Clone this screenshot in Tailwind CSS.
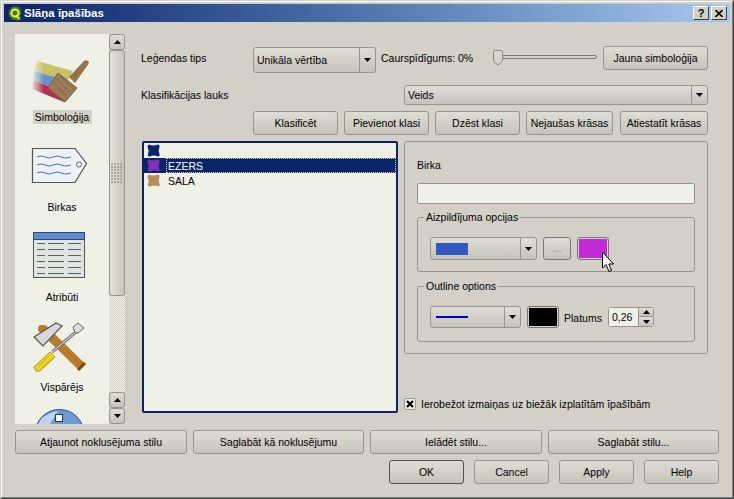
<!DOCTYPE html>
<html lang="lv">
<head>
<meta charset="UTF-8" />
<title>Slāņa īpašības</title>
<script src="https://cdn.jsdelivr.net/npm/@tailwindcss/browser@4"></script>
</head>
<body class="m-0 overflow-hidden bg-[#d4d0c8]">
<div class="relative w-[734px] h-[499px] overflow-hidden border border-t-[#d4d0c8] border-l-[#d4d0c8] border-r-[#404040] border-b-[#404040] font-['Liberation_Sans',sans-serif] text-[10.5px] leading-[14px] text-black">
<div class="w-full h-full border border-t-white border-l-white border-r-[#808080] border-b-[#808080] p-[2px] flex flex-col">

  <!-- title bar -->
  <div class="h-[18px] shrink-0 flex items-center bg-linear-to-r from-[#0a246a] to-[#a6caf0] pl-[4px] pr-[3px]">
    <svg width="14" height="15" viewBox="0 0 14 15" class="shrink-0">
      <path d="M2 3 L5 0.5 L9 0.5 L12 2 L13.5 6 L12.5 10 L13.5 14 L9 14.5 L4 13.5 L1 10 L0.5 6 Z" fill="#3f7a18" />
      <circle cx="7" cy="7" r="3.6" fill="none" stroke="#f2ee50" stroke-width="2" />
      <path d="M8 9 L11 13" stroke="#f2ee50" stroke-width="2" />
    </svg>
    <span class="ml-[2px] font-bold text-white text-[11.5px]">Slāņa īpašības</span>
    <div class="ml-auto flex items-center gap-[2px]">
      <div class="w-[16px] h-[14px] bg-[#d4d0c8] border border-t-white border-l-white border-r-[#404040] border-b-[#404040] flex items-center justify-center font-bold text-[11px] leading-none">?</div>
      <div class="w-[16px] h-[14px] bg-[#d4d0c8] border border-t-white border-l-white border-r-[#404040] border-b-[#404040] flex items-center justify-center">
        <svg width="8" height="7" viewBox="0 0 8 7"><path d="M0.5 0 L7.5 7 M7.5 0 L0.5 7" stroke="#000" stroke-width="1.6" /></svg>
      </div>
    </div>
  </div>

  <!-- main area -->
  <div class="flex mt-[12px] ml-[11px] h-[390px] shrink-0">

    <!-- page list -->
    <div class="w-[94px] h-[390px] bg-[#f0f1e6] overflow-hidden flex flex-col items-center shrink-0">
      <svg width="94" height="76" viewBox="15 34 94 76" class="shrink-0">
        <defs>
          <linearGradient id="fa" x1="0" x2="1" y1="0" y2="0"><stop offset="0" stop-color="#f0f1e6" /><stop offset="0.3" stop-color="#f0f1e6" stop-opacity="0" /></linearGradient>
        </defs>
        <path d="M37 61 L73 71 L68 81 L34 71 Z" fill="#c9c168" />
        <path d="M34 71 L68 81 L63 92 L33 80 Z" fill="#6b8fc8" />
        <path d="M33 80 L63 92 L64 102 L32 89 Z" fill="#b5304f" />
        <path d="M31 60 L74 60 L74 103 L31 103 Z" fill="url(#fa)" />
        <path d="M69 77 L84 61 Q87 59 89 62 Q89 64 87 66 L75 83 Z" fill="#94734c" />
        <path d="M58 73 L77 88 L65 102 L48 88 Z" fill="#9a7a58" stroke="#7a5e42" />
        <path d="M55 77 L70 92 M52 81 L67 96 M61 77 L74 89" stroke="#7a5e42" stroke-width="0.8" />
      </svg>
      <div class="h-[14px] w-[59px] bg-[#d4d0c8] text-center shrink-0">Simboloģija</div>

      <svg width="94" height="76" viewBox="15 124 94 76" class="shrink-0">
        <path d="M32.5 148.5 L75 148.5 L86.5 163.5 L75 182.5 L32.5 182.5 Z" fill="#eef1f6" stroke="#555" stroke-width="1.2" />
        <circle cx="79" cy="164.5" r="2.6" fill="#f0f1e6" stroke="#666" />
        <path d="M37 157 q4 -2 8 0 t8 0 t8 0 t10 0 M37 165 q4 -2 8 0 t8 0 t8 0 t10 0 M37 173 q4 -2 8 0 t8 0 t8 0 t10 0" fill="none" stroke="#4a72b8" stroke-width="1" />
      </svg>
      <div class="h-[14px] text-center shrink-0">Birkas</div>

      <svg width="94" height="76" viewBox="15 214 94 76" class="shrink-0">
        <rect x="33.5" y="232.5" width="51" height="45" fill="#dfe5e0" stroke="#555" />
        <rect x="33.5" y="232.5" width="51" height="7" fill="#5f8ac6" stroke="#24498c" />
        <path d="M37 243.5 H45 M48 243.5 H64 M68 243.5 H81 M37 249.5 H45 M48 249.5 H64 M68 249.5 H81 M37 255.5 H45 M48 255.5 H64 M68 255.5 H81 M37 261.5 H45 M48 261.5 H64 M68 261.5 H81 M37 267.5 H45 M48 267.5 H64 M68 267.5 H81 M37 273.5 H45 M48 273.5 H64 M68 273.5 H81" stroke="#5a625c" stroke-width="1" />
      </svg>
      <div class="h-[14px] text-center shrink-0">Atribūti</div>

      <svg width="94" height="76" viewBox="15 304 94 76" class="shrink-0">
        <path d="M42 328 L81 366" stroke="#b57a2a" stroke-width="9" />
        <path d="M78 370 L85 363" stroke="#7a4a12" stroke-width="3" />
        <circle cx="42" cy="329" r="4" fill="#b87a28" />
        <path d="M34 337 L56 323 L62 326 L43 346 Z" fill="#d8d8d8" stroke="#555" stroke-width="1.2" />
        <path d="M52 352 L76 332" stroke="#777" stroke-width="3" />
        <path d="M52 352 L76 332" stroke="#eee" stroke-width="1" />
        <path d="M73 327 L78 323 L84 328 L78 333 L75 333 Z" fill="#ddd" stroke="#666" />
        <path d="M34 367 L50 352 L55 357 L40 371 L36 371 Z" fill="#efd52a" stroke="#b79a10" />
        <path d="M39 365 L50 355 M42 368 L53 358" stroke="#b79a10" stroke-width="0.8" />
      </svg>
      <div class="h-[14px] text-center shrink-0">Vispārējs</div>

      <svg width="94" height="30" viewBox="15 394 94 30" class="shrink-0">
        <circle cx="59.5" cy="434" r="24.5" fill="#6f9bd2" stroke="#2d5190" />
        <path d="M42 418 Q50 412 58 411 L50 424 L38 424 Z" fill="#bcd2ee" />
        <rect x="55.5" y="414.5" width="7" height="7" fill="#fff" stroke="#333" />
      </svg>
    </div>

    <!-- scrollbar -->
    <div class="w-[16px] h-[390px] flex flex-col shrink-0">
      <div class="h-[16px] border border-[#96948c] rounded-[3px] bg-linear-to-b from-[#e0ddd6] to-[#c6c3bb] flex items-center justify-center">
        <svg width="7" height="4" viewBox="0 0 7 4"><path d="M3.5 0 L7 4 H0 Z" /></svg>
      </div>
      <div class="h-[246px] border border-[#96948c] rounded-[3px] bg-linear-to-r from-[#e4e1da] to-[#c8c5bd] flex items-center justify-center">
        <svg width="12" height="20" viewBox="0 0 12 20">
          <defs><pattern id="gr" width="3" height="3" patternUnits="userSpaceOnUse"><rect width="2" height="2" fill="#aaa79e" /></pattern></defs>
          <rect width="12" height="20" fill="url(#gr)" />
        </svg>
      </div>
      <div class="h-[96px] bg-[repeating-conic-gradient(#d4d0c8_0_25%,#f2f2ea_0_50%)] bg-[length:2px_2px]"></div>
      <div class="h-[16px] border border-[#96948c] rounded-[3px] bg-linear-to-b from-[#e0ddd6] to-[#c6c3bb] flex items-center justify-center">
        <svg width="7" height="4" viewBox="0 0 7 4"><path d="M3.5 0 L7 4 H0 Z" /></svg>
      </div>
      <div class="h-[16px] border border-[#96948c] rounded-[3px] bg-linear-to-b from-[#e0ddd6] to-[#c6c3bb] flex items-center justify-center">
        <svg width="7" height="4" viewBox="0 0 7 4"><path d="M0 0 H7 L3.5 4 Z" /></svg>
      </div>
    </div>

    <!-- right column -->
    <div class="ml-[16px] w-[567px] flex flex-col">

      <div class="flex items-start h-[27px] mt-[12px]">
        <div class="w-[112px] mt-[5px]">Leģendas tips</div>
        <div class="w-[123px] h-[26px] mt-[1px] flex border border-[#96948c] rounded-[3px] bg-linear-to-b from-[#e0ddd6] to-[#c6c3bb]">
          <div class="flex-1 pl-[3px] flex items-center">Unikāla vērtība</div>
          <div class="w-[16px] border-l border-[#96948c] flex items-center justify-center">
            <svg width="7" height="4" viewBox="0 0 7 4"><path d="M0 0 H7 L3.5 4 Z" /></svg>
          </div>
        </div>
        <div class="w-[112px] ml-[5px] mt-[5px] whitespace-nowrap">Caurspīdīgums: 0%</div>
        <svg width="104" height="20" viewBox="0 0 104 20" class="shrink-0 mt-[4px]">
          <rect x="9.5" y="5.5" width="94" height="3" rx="1.5" fill="#d4d0c8" stroke="#7d7b74" />
          <path d="M0.5 2 Q0.5 0.5 2 0.5 H8 Q9.5 0.5 9.5 2 V11 L5 15 L0.5 11 Z" fill="#d8d5ce" stroke="#8a8880" />
        </svg>
        <div class="w-[105px] h-[24px] ml-[6px] flex items-center justify-center border border-[#96948c] rounded-[3px] bg-linear-to-b from-[#e0ddd6] to-[#c6c3bb]">Jauna simboloģija</div>
      </div>

      <div class="flex items-center h-[20px] mt-[12px]">
        <div class="w-[263px]">Klasifikācijas lauks</div>
        <div class="w-[304px] h-[20px] flex border border-[#96948c] rounded-[3px] bg-linear-to-b from-[#e0ddd6] to-[#c6c3bb]">
          <div class="flex-1 pl-[3px] flex items-center">Veids</div>
          <div class="w-[16px] border-l border-[#96948c] flex items-center justify-center">
            <svg width="7" height="4" viewBox="0 0 7 4"><path d="M0 0 H7 L3.5 4 Z" /></svg>
          </div>
        </div>
      </div>

      <div class="flex h-[24px] mt-[6px] ml-[112px]">
        <div class="w-[85px] flex items-center justify-center border border-[#96948c] rounded-[3px] bg-linear-to-b from-[#e0ddd6] to-[#c6c3bb]">Klasificēt</div>
        <div class="w-[85px] ml-[6px] flex items-center justify-center border border-[#96948c] rounded-[3px] bg-linear-to-b from-[#e0ddd6] to-[#c6c3bb]">Pievienot klasi</div>
        <div class="w-[85px] ml-[6px] flex items-center justify-center border border-[#96948c] rounded-[3px] bg-linear-to-b from-[#e0ddd6] to-[#c6c3bb]">Dzēst klasi</div>
        <div class="w-[87px] ml-[6px] flex items-center justify-center border border-[#96948c] rounded-[3px] bg-linear-to-b from-[#e0ddd6] to-[#c6c3bb] whitespace-nowrap">Nejaušas krāsas</div>
        <div class="w-[88px] ml-[7px] flex items-center justify-center border border-[#96948c] rounded-[3px] bg-linear-to-b from-[#e0ddd6] to-[#c6c3bb] whitespace-nowrap">Atiestatīt krāsas</div>
      </div>

      <div class="flex items-start mt-[6px]">
        <!-- class list -->
        <div class="ml-[1px] w-[256px] h-[272px] border-2 border-[#0a246a] rounded-[2px] bg-[#f0f1e6] flex flex-col">
          <div class="h-[15px] flex items-center pl-[3px]">
            <svg width="13" height="13" viewBox="0 0 13 13"><path d="M2 0.5 Q6 2.5 11 0.5 Q13 1 12.5 3 Q11 6.5 12.5 10 Q13 12.5 11 12.5 Q7 10.5 3 12.5 Q0.5 13 1 10 Q2.5 6.5 0.5 3 Q0.5 1 2 0.5 Z" fill="#0a246a" /></svg>
          </div>
          <div class="h-[15px] flex items-center bg-[#0a246a] pl-[3px]">
            <svg width="13" height="13" viewBox="0 0 13 13" class="shrink-0"><path d="M2 0.5 Q6 2.5 11 0.5 Q13 1 12.5 3 Q11 6.5 12.5 10 Q13 12.5 11 12.5 Q7 10.5 3 12.5 Q0.5 13 1 10 Q2.5 6.5 0.5 3 Q0.5 1 2 0.5 Z" fill="#8231b5" /></svg>
            <div class="ml-[6px] flex-1 h-[15px] pl-[2px] flex items-center text-white outline-1 outline-dotted -outline-offset-1 outline-[#e8d890]">EZERS</div>
          </div>
          <div class="h-[15px] flex items-center pl-[3px]">
            <svg width="13" height="13" viewBox="0 0 13 13" class="shrink-0"><path d="M2 0.5 Q6 2.5 11 0.5 Q13 1 12.5 3 Q11 6.5 12.5 10 Q13 12.5 11 12.5 Q7 10.5 3 12.5 Q0.5 13 1 10 Q2.5 6.5 0.5 3 Q0.5 1 2 0.5 Z" fill="#b98c5c" /></svg>
            <div class="ml-[8px]">SALA</div>
          </div>
        </div>

        <div class="ml-[6px] w-[304px] flex flex-col">
          <!-- symbol panel -->
          <div class="h-[213px] border border-[#96948c] rounded-[3px] px-[12px] flex flex-col">
            <div class="mt-[16px] h-[14px]">Birka</div>
            <div class="mt-[11px] h-[21px] border border-[#96948c] rounded-[2px] bg-[#f0f1e6] shrink-0"></div>

            <div class="relative mt-[13px] h-[55px] border border-[#96948c] rounded-[3px] pl-[12px] pt-[19px] flex items-start shrink-0">
              <span class="absolute -top-[8px] left-[6px] bg-[#d4d0c8] px-[2px]">Aizpildījuma opcijas</span>
              <div class="w-[107px] h-[23px] flex border border-[#96948c] rounded-[3px] bg-linear-to-b from-[#e0ddd6] to-[#c6c3bb]">
                <div class="flex-1 pl-[5px] flex items-center"><div class="w-[32px] h-[12px] bg-[#3358c4]"></div></div>
                <div class="w-[16px] border-l border-[#96948c] flex items-center justify-center">
                  <svg width="7" height="4" viewBox="0 0 7 4"><path d="M0 0 H7 L3.5 4 Z" /></svg>
                </div>
              </div>
              <div class="w-[28px] h-[23px] ml-[6px] flex items-center justify-center border border-[#777] rounded-[3px] bg-linear-to-b from-[#e0ddd6] to-[#c6c3bb] text-[#8a8880] leading-none">...</div>
              <div class="w-[32px] h-[23px] ml-[6px] border border-[#777] rounded-[3px] p-[1px] bg-[#d4d0c8]"><div class="w-full h-full bg-[#c22ad8]"></div></div>
            </div>

            <div class="relative mt-[14px] h-[56px] border border-[#96948c] rounded-[3px] pl-[12px] pt-[19px] flex items-start shrink-0">
              <span class="absolute -top-[8px] left-[6px] bg-[#d4d0c8] px-[2px]">Outline options</span>
              <div class="w-[91px] h-[22px] flex border border-[#96948c] rounded-[3px] bg-linear-to-b from-[#e0ddd6] to-[#c6c3bb]">
                <div class="flex-1 pl-[5px] flex items-center"><div class="w-[32px] h-[2px] bg-[#0000c8]"></div></div>
                <div class="w-[16px] border-l border-[#96948c] flex items-center justify-center">
                  <svg width="7" height="4" viewBox="0 0 7 4"><path d="M0 0 H7 L3.5 4 Z" /></svg>
                </div>
              </div>
              <div class="w-[32px] h-[22px] ml-[6px] border border-[#777] rounded-[3px] p-[1px] bg-[#d4d0c8]"><div class="w-full h-full bg-black"></div></div>
              <div class="ml-[5px] w-[44px] mt-[5px]">Platums</div>
              <div class="w-[46px] h-[20px] mt-[1px] flex border border-[#96948c] rounded-[3px]">
                <div class="w-[29px] bg-[#f0f1e6] flex items-center pl-[3px]">0,26</div>
                <div class="w-[15px] border-l border-[#96948c] flex flex-col">
                  <div class="h-[9px] flex items-center justify-center bg-linear-to-b from-[#e0ddd6] to-[#c6c3bb] border-b border-[#96948c]"><svg width="7" height="4" viewBox="0 0 7 4"><path d="M3.5 0 L7 4 H0 Z" /></svg></div>
                  <div class="flex-1 flex items-center justify-center bg-linear-to-b from-[#e0ddd6] to-[#c6c3bb]"><svg width="7" height="4" viewBox="0 0 7 4"><path d="M0 0 H7 L3.5 4 Z" /></svg></div>
                </div>
              </div>
            </div>
          </div>

          <!-- checkbox -->
          <div class="flex items-center mt-[43px] h-[14px]">
            <div class="w-[12px] h-[12px] border border-[#96948c] rounded-[2px] bg-[#f0f1e6] flex items-center justify-center shrink-0">
              <svg width="8" height="8" viewBox="0 0 8 8"><path d="M1 1 L7 7 M7 1 L1 7" stroke="#000" stroke-width="2.2" /></svg>
            </div>
            <span class="ml-[5px] whitespace-nowrap">Ierobežot izmaiņas uz biežāk izplatītām īpašībām</span>
          </div>
        </div>
      </div>
    </div>
  </div>

  <!-- style buttons -->
  <div class="flex h-[24px] mt-[6px] ml-[11px] shrink-0">
    <div class="w-[172px] flex items-center justify-center border border-[#96948c] rounded-[3px] bg-linear-to-b from-[#e0ddd6] to-[#c6c3bb]">Atjaunot noklusējuma stilu</div>
    <div class="w-[171px] ml-[6px] flex items-center justify-center border border-[#96948c] rounded-[3px] bg-linear-to-b from-[#e0ddd6] to-[#c6c3bb]">Saglabāt kā noklusējumu</div>
    <div class="w-[172px] ml-[6px] flex items-center justify-center border border-[#96948c] rounded-[3px] bg-linear-to-b from-[#e0ddd6] to-[#c6c3bb]">Ielādēt stilu...</div>
    <div class="w-[171px] ml-[6px] flex items-center justify-center border border-[#96948c] rounded-[3px] bg-linear-to-b from-[#e0ddd6] to-[#c6c3bb]">Saglabāt stilu...</div>
  </div>

  <!-- dialog buttons -->
  <div class="flex justify-end h-[24px] mt-[6px] mr-[11px] shrink-0">
    <div class="w-[75px] flex items-center justify-center border border-[#55534e] rounded-[3px] bg-linear-to-b from-[#e0ddd6] to-[#c6c3bb]">OK</div>
    <div class="w-[75px] ml-[10px] flex items-center justify-center border border-[#96948c] rounded-[3px] bg-linear-to-b from-[#e0ddd6] to-[#c6c3bb]">Cancel</div>
    <div class="w-[75px] ml-[10px] flex items-center justify-center border border-[#96948c] rounded-[3px] bg-linear-to-b from-[#e0ddd6] to-[#c6c3bb]">Apply</div>
    <div class="w-[75px] ml-[10px] flex items-center justify-center border border-[#96948c] rounded-[3px] bg-linear-to-b from-[#e0ddd6] to-[#c6c3bb]">Help</div>
  </div>
</div>

<!-- mouse pointer -->
<svg width="14" height="22" viewBox="0 0 14 22" class="absolute left-[600px] top-[250px]">
  <path d="M1.5 1 V17 L5 13.5 L8 20.5 L10.5 19.5 L7.8 13 L12.5 13 Z" fill="#fff" stroke="#000" stroke-width="1" />
</svg>
</div>
</body>
</html>
